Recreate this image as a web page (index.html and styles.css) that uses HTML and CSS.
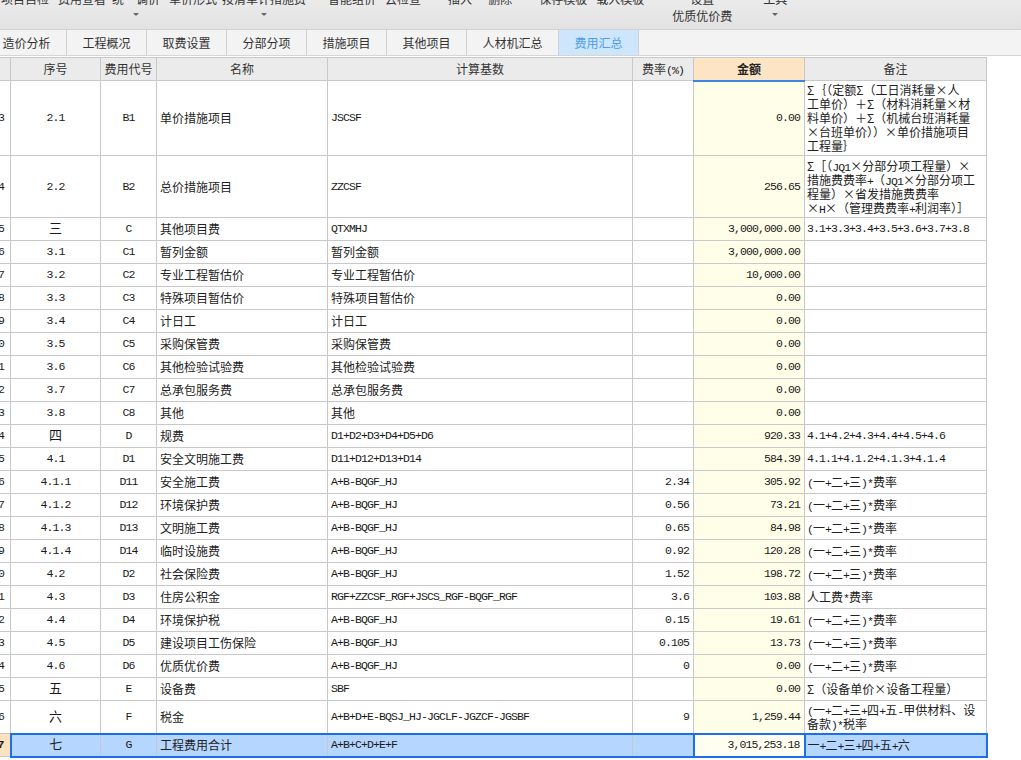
FILE: index.html
```html
<!DOCTYPE html>
<html lang="zh-CN">
<head>
<meta charset="utf-8">
<title>费用汇总</title>
<link rel="stylesheet" href="styles.css">
</head>
<body>
<div class="toolbar">
  <div class="tb"><span class="lbl">项目自检</span></div>
  <div class="tb"><span class="lbl">费用查看</span></div>
  <div class="tb"><span class="lbl">统一调价</span><span class="arr"></span></div>
  <div class="tb"><span class="lbl">单价形式</span></div>
  <div class="tb"><span class="lbl">按清单计措施费</span><span class="arr"></span></div>
  <div class="tb"><span class="lbl">智能组价</span></div>
  <div class="tb"><span class="lbl">云检查</span></div>
  <div class="tb"><span class="lbl">插入</span></div>
  <div class="tb"><span class="lbl">删除</span></div>
  <div class="tb"><span class="lbl">保存模板</span></div>
  <div class="tb"><span class="lbl">载入模板</span></div>
  <div class="tb"><span class="lbl">设置</span><span class="sub">优质优价费</span></div>
  <div class="tb"><span class="lbl">工具</span><span class="arr"></span></div>
</div>
<div class="tabs">
  <div class="tab">造价分析</div>
  <div class="tab">工程概况</div>
  <div class="tab">取费设置</div>
  <div class="tab">分部分项</div>
  <div class="tab">措施项目</div>
  <div class="tab">其他项目</div>
  <div class="tab wide">人材机汇总</div>
  <div class="tab active">费用汇总</div>
</div>
<div class="grid-wrap">
<table class="grid">
  <colgroup>
    <col class="w-num"><col class="w-seq"><col class="w-code"><col class="w-name"><col class="w-base"><col class="w-rate"><col class="w-amt"><col class="w-note">
  </colgroup>
  <thead>
    <tr class="hd">
      <th class="num"></th><th>序号</th><th>费用代号</th><th>名称</th><th>计算基数</th><th>费率<span class="m">(%)</span></th><th class="amt-h">金额</th><th>备注</th>
    </tr>
  </thead>
  <tbody>
    <tr class="h75"><td class="num">3</td><td class="seq">2.1</td><td class="code">B1</td><td class="name">单价措施项目</td><td class="base m">JSCSF</td><td class="rate"></td><td class="amt">0.00</td><td class="note">Σ｛（定额Σ（工日消耗量×人<br>工单价）＋Σ（材料消耗量×材<br>料单价）＋Σ（机械台班消耗量<br>×台班单价））×单价措施项目<br>工程量｝</td></tr>
    <tr class="h62"><td class="num">4</td><td class="seq">2.2</td><td class="code">B2</td><td class="name">总价措施项目</td><td class="base m">ZZCSF</td><td class="rate"></td><td class="amt">256.65</td><td class="note">Σ［（<span class="m">JQ1</span>×分部分项工程量）×<br>措施费费率<span class="m">+</span>（<span class="m">JQ1</span>×分部分项工<br>程量）×省发措施费费率<br>×<span class="m">H</span>×（管理费费率<span class="m">+</span>利润率）］</td></tr>
    <tr><td class="num">5</td><td class="seq"><span class="cn">三</span></td><td class="code">C</td><td class="name">其他项目费</td><td class="base m">QTXMHJ</td><td class="rate"></td><td class="amt">3,000,000.00</td><td class="note m">3.1+3.3+3.4+3.5+3.6+3.7+3.8</td></tr>
    <tr><td class="num">6</td><td class="seq">3.1</td><td class="code">C1</td><td class="name">暂列金额</td><td class="base">暂列金额</td><td class="rate"></td><td class="amt">3,000,000.00</td><td class="note"></td></tr>
    <tr><td class="num">7</td><td class="seq">3.2</td><td class="code">C2</td><td class="name">专业工程暂估价</td><td class="base">专业工程暂估价</td><td class="rate"></td><td class="amt">10,000.00</td><td class="note"></td></tr>
    <tr><td class="num">8</td><td class="seq">3.3</td><td class="code">C3</td><td class="name">特殊项目暂估价</td><td class="base">特殊项目暂估价</td><td class="rate"></td><td class="amt">0.00</td><td class="note"></td></tr>
    <tr><td class="num">9</td><td class="seq">3.4</td><td class="code">C4</td><td class="name">计日工</td><td class="base">计日工</td><td class="rate"></td><td class="amt">0.00</td><td class="note"></td></tr>
    <tr><td class="num">10</td><td class="seq">3.5</td><td class="code">C5</td><td class="name">采购保管费</td><td class="base">采购保管费</td><td class="rate"></td><td class="amt">0.00</td><td class="note"></td></tr>
    <tr><td class="num">11</td><td class="seq">3.6</td><td class="code">C6</td><td class="name">其他检验试验费</td><td class="base">其他检验试验费</td><td class="rate"></td><td class="amt">0.00</td><td class="note"></td></tr>
    <tr><td class="num">12</td><td class="seq">3.7</td><td class="code">C7</td><td class="name">总承包服务费</td><td class="base">总承包服务费</td><td class="rate"></td><td class="amt">0.00</td><td class="note"></td></tr>
    <tr><td class="num">13</td><td class="seq">3.8</td><td class="code">C8</td><td class="name">其他</td><td class="base">其他</td><td class="rate"></td><td class="amt">0.00</td><td class="note"></td></tr>
    <tr><td class="num">14</td><td class="seq"><span class="cn">四</span></td><td class="code">D</td><td class="name">规费</td><td class="base m">D1+D2+D3+D4+D5+D6</td><td class="rate"></td><td class="amt">920.33</td><td class="note m">4.1+4.2+4.3+4.4+4.5+4.6</td></tr>
    <tr><td class="num">15</td><td class="seq">4.1</td><td class="code">D1</td><td class="name">安全文明施工费</td><td class="base m">D11+D12+D13+D14</td><td class="rate"></td><td class="amt">584.39</td><td class="note m">4.1.1+4.1.2+4.1.3+4.1.4</td></tr>
    <tr><td class="num">16</td><td class="seq">4.1.1</td><td class="code">D11</td><td class="name">安全施工费</td><td class="base m">A+B-BQGF_HJ</td><td class="rate">2.34</td><td class="amt">305.92</td><td class="note"><span class="m">(</span>一<span class="m">+</span>二<span class="m">+</span>三<span class="m">)*</span>费率</td></tr>
    <tr><td class="num">17</td><td class="seq">4.1.2</td><td class="code">D12</td><td class="name">环境保护费</td><td class="base m">A+B-BQGF_HJ</td><td class="rate">0.56</td><td class="amt">73.21</td><td class="note"><span class="m">(</span>一<span class="m">+</span>二<span class="m">+</span>三<span class="m">)*</span>费率</td></tr>
    <tr><td class="num">18</td><td class="seq">4.1.3</td><td class="code">D13</td><td class="name">文明施工费</td><td class="base m">A+B-BQGF_HJ</td><td class="rate">0.65</td><td class="amt">84.98</td><td class="note"><span class="m">(</span>一<span class="m">+</span>二<span class="m">+</span>三<span class="m">)*</span>费率</td></tr>
    <tr><td class="num">19</td><td class="seq">4.1.4</td><td class="code">D14</td><td class="name">临时设施费</td><td class="base m">A+B-BQGF_HJ</td><td class="rate">0.92</td><td class="amt">120.28</td><td class="note"><span class="m">(</span>一<span class="m">+</span>二<span class="m">+</span>三<span class="m">)*</span>费率</td></tr>
    <tr><td class="num">20</td><td class="seq">4.2</td><td class="code">D2</td><td class="name">社会保险费</td><td class="base m">A+B-BQGF_HJ</td><td class="rate">1.52</td><td class="amt">198.72</td><td class="note"><span class="m">(</span>一<span class="m">+</span>二<span class="m">+</span>三<span class="m">)*</span>费率</td></tr>
    <tr><td class="num">21</td><td class="seq">4.3</td><td class="code">D3</td><td class="name">住房公积金</td><td class="base m">RGF+ZZCSF_RGF+JSCS_RGF-BQGF_RGF</td><td class="rate">3.6</td><td class="amt">103.88</td><td class="note">人工费<span class="m">*</span>费率</td></tr>
    <tr><td class="num">22</td><td class="seq">4.4</td><td class="code">D4</td><td class="name">环境保护税</td><td class="base m">A+B-BQGF_HJ</td><td class="rate">0.15</td><td class="amt">19.61</td><td class="note"><span class="m">(</span>一<span class="m">+</span>二<span class="m">+</span>三<span class="m">)*</span>费率</td></tr>
    <tr><td class="num">23</td><td class="seq">4.5</td><td class="code">D5</td><td class="name">建设项目工伤保险</td><td class="base m">A+B-BQGF_HJ</td><td class="rate">0.105</td><td class="amt">13.73</td><td class="note"><span class="m">(</span>一<span class="m">+</span>二<span class="m">+</span>三<span class="m">)*</span>费率</td></tr>
    <tr><td class="num">24</td><td class="seq">4.6</td><td class="code">D6</td><td class="name">优质优价费</td><td class="base m">A+B-BQGF_HJ</td><td class="rate">0</td><td class="amt">0.00</td><td class="note"><span class="m">(</span>一<span class="m">+</span>二<span class="m">+</span>三<span class="m">)*</span>费率</td></tr>
    <tr><td class="num">25</td><td class="seq"><span class="cn">五</span></td><td class="code">E</td><td class="name">设备费</td><td class="base m">SBF</td><td class="rate"></td><td class="amt">0.00</td><td class="note">Σ（设备单价×设备工程量）</td></tr>
    <tr class="h33"><td class="num">26</td><td class="seq"><span class="cn">六</span></td><td class="code">F</td><td class="name">税金</td><td class="base m">A+B+D+E-BQSJ_HJ-JGCLF-JGZCF-JGSBF</td><td class="rate">9</td><td class="amt">1,259.44</td><td class="note"><span class="m">(</span>一<span class="m">+</span>二<span class="m">+</span>三<span class="m">+</span>四<span class="m">+</span>五<span class="m">-</span>甲供材料、设<br>备款<span class="m">)*</span>税率</td></tr>
    <tr class="sel"><td class="num cur">27</td><td class="seq first"><span class="cn">七</span></td><td class="code">G</td><td class="name">工程费用合计</td><td class="base m">A+B+C+D+E+F</td><td class="rate"></td><td class="amt">3,015,253.18</td><td class="note last">一<span class="m">+</span>二<span class="m">+</span>三<span class="m">+</span>四<span class="m">+</span>五<span class="m">+</span>六</td></tr>
  </tbody>
</table>
</div>
</body>
</html>
```
FILE: styles.css
```css
html, body {
  margin: 0;
  padding: 0;
  background: #ffffff;
  overflow: hidden;
}
body {
  width: 1021px;
  height: 760px;
  font-family: "Noto Sans CJK SC", "Noto Sans", sans-serif;
  font-size: 12px;
  color: #222;
}

/* toolbar */
.toolbar {
  display: flex;
  align-items: flex-start;
  height: 29px;
  background: linear-gradient(#ebebeb, #e2e2e2);
  border-bottom: 1px solid #d2d2d2;
  overflow: hidden;
  color: #333;
}
.tb {
  display: flex;
  flex-direction: column;
  align-items: center;
  flex: none;
}
.tb .lbl {
  margin-top: -8px;
  line-height: 14px;
  white-space: nowrap;
}
.tb .sub {
  margin-top: 3px;
  line-height: 14px;
  white-space: nowrap;
}
.tb .arr {
  margin-top: 7px;
  width: 0;
  height: 0;
  border-left: 3px solid transparent;
  border-right: 3px solid transparent;
  border-top: 3px solid #666;
}
.tb:nth-child(1) { margin-left: 1px; }
.tb:nth-child(2) { margin-left: 9px; }
.tb:nth-child(3) { margin-left: 6px; }
.tb:nth-child(4) { margin-left: 9px; }
.tb:nth-child(5) { margin-left: 5px; }
.tb:nth-child(6) { margin-left: 22px; }
.tb:nth-child(7) { margin-left: 9px; }
.tb:nth-child(8) { margin-left: 27px; }
.tb:nth-child(9) { margin-left: 16px; }
.tb:nth-child(10) { margin-left: 27px; }
.tb:nth-child(11) { margin-left: 9px; }
.tb:nth-child(12) { margin-left: 28px; }
.tb:nth-child(13) { margin-left: 31px; }

/* tabs */
.tabs {
  display: flex;
  height: 25px;
  margin-left: -13px;
  background: #f3f3f3;
  border-bottom: 1px solid #d6d6d6;
}
.tab {
  flex: none;
  width: 79px;
  border-right: 1px solid #d0d0d0;
  line-height: 25px;
  text-align: center;
  color: #333;
}
.tab.wide { width: 91px; }
.tab.active {
  background: #cde6fc;
  color: #4f9de8;
}

/* grid */
.grid-wrap {
  margin-top: 1px;
  margin-left: -30px;
}
.grid {
  border-collapse: collapse;
  table-layout: fixed;
  width: 1016px;
  line-height: 14px;
}
.w-num { width: 40px; }
.w-seq { width: 90px; }
.w-code { width: 56px; }
.w-name { width: 171px; }
.w-base { width: 305px; }
.w-rate { width: 61px; }
.w-amt { width: 111px; }
.w-note { width: 182px; }

.grid th, .grid td {
  border: 1px solid #c8c8c8;
  padding: 0 3px;
  white-space: nowrap;
  overflow: hidden;
  vertical-align: middle;
}
.grid tr { height: 23px; }
.grid tr.h75 { height: 75px; }
.grid tr.h62 { height: 62px; }
.grid tr.h33 { height: 33px; }

.grid th {
  background: #ebebeb;
  font-weight: normal;
  color: #333;
  text-align: center;
}
.grid th.amt-h {
  background: #fde4c4;
  font-weight: bold;
  color: #222;
  border-bottom: 2px solid #3a84e4;
}

.m, .seq, .code, .rate, .amt, .num {
  font-family: "Liberation Mono", "DejaVu Sans Mono", monospace;
  font-size: 11.5px;
  letter-spacing: -0.9px;
  color: #1a1a1a;
}
.note .m, th .m {
  line-height: 10px;
}
.cn {
  font-family: "Noto Sans CJK SC", sans-serif;
  font-size: 13px;
  letter-spacing: 0;
}

.num {
  direction: rtl;
  text-align: right;
  padding-right: 6px !important;
  padding-left: 0 !important;
}
.seq, .code { text-align: center; }
.rate, .amt { text-align: right; }
.rate, .amt { padding-right: 4px !important; }
.amt { background: #fffee9; }
.note { padding-left: 2px !important; }

/* selected row */
.grid tr.sel td {
  background: #b5d6fe;
  border-top: 2px solid #1b6ef0;
  border-bottom: 2px solid #1b6ef0;
}
.grid tr.sel td.num {
  background: #fde2bd;
  font-weight: bold;
  border-top: 1px solid #c8c8c8;
  border-bottom: 1px solid #c8c8c8;
}
.grid tr.sel td.first { border-left: 2px solid #1b6ef0; }
.grid tr.sel td.last { border-right: 2px solid #1b6ef0; }
.grid tr.sel td.amt {
  background: #fffef0;
  border-left: 2px solid #1b6ef0;
  border-right: 2px solid #1b6ef0;
}
```
